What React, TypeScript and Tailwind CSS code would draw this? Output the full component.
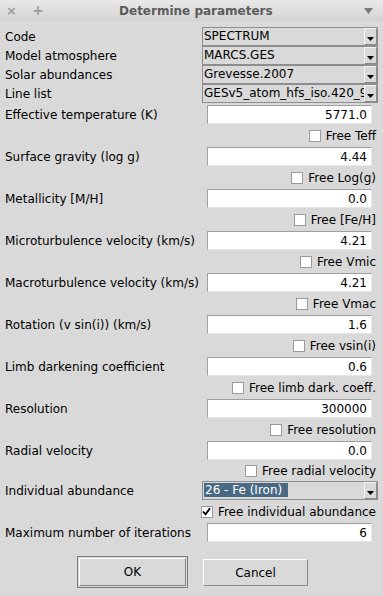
import React from 'react'

const font = { fontFamily: '"DejaVu Sans", Verdana, sans-serif' }

const combos = [
  { label: 'Code', value: 'SPECTRUM' },
  { label: 'Model atmosphere', value: 'MARCS.GES' },
  { label: 'Solar abundances', value: 'Grevesse.2007' },
  { label: 'Line list', value: 'GESv5_atom_hfs_iso.420_920nm' },
]

const params = [
  { label: 'Effective temperature (K)', value: '5771.0', free: 'Free Teff' },
  { label: 'Surface gravity (log g)', value: '4.44', free: 'Free Log(g)' },
  { label: 'Metallicity [M/H]', value: '0.0', free: 'Free [Fe/H]' },
  { label: 'Microturbulence velocity (km/s)', value: '4.21', free: 'Free Vmic' },
  { label: 'Macroturbulence velocity (km/s)', value: '4.21', free: 'Free Vmac' },
  { label: 'Rotation (v sin(i)) (km/s)', value: '1.6', free: 'Free vsin(i)' },
  { label: 'Limb darkening coefficient', value: '0.6', free: 'Free limb dark. coeff.' },
  { label: 'Resolution', value: '300000', free: 'Free resolution' },
  { label: 'Radial velocity', value: '0.0', free: 'Free radial velocity' },
]

function ArrowButton() {
  return (
    <div className="w-[13px] h-[17px] shrink-0 border-t border-l border-t-[#f4f4f4] border-l-[#f4f4f4] border-b border-r border-b-[#8a8a8a] border-r-[#8a8a8a] bg-[#d9d9d9] flex items-end justify-center pb-[3px]">
      <svg width="7" height="4" viewBox="0 0 7 4">
        <path d="M0 0h7L3.5 4z" fill="#000" />
      </svg>
    </div>
  )
}

function Combo({ value, selected }: { value: string; selected?: boolean }) {
  return (
    <div className="w-[176px] h-[19px] mr-[5px] border border-[#8e8e8e] bg-[#d9d9d9] flex items-center overflow-hidden">
      <div className="flex-1 min-w-0 overflow-hidden whitespace-nowrap pl-[1px] leading-[15px]">
        {selected ? (
          <span className="bg-[#4a6984] text-white px-[1px] pr-[6px]">{value}</span>
        ) : (
          <span className="text-black">{value}</span>
        )}
      </div>
      <ArrowButton />
    </div>
  )
}

function Entry({ value }: { value: string }) {
  return (
    <div className="w-[165px] h-[19px] mr-[11px] bg-white border border-t-[#a0a0a0] border-l-[#a0a0a0] border-b-[#e6e6e6] border-r-[#e6e6e6] flex items-center justify-end pr-[4px] text-black">
      {value}
    </div>
  )
}

function Check({ label, checked, h = 'h-[23px]' }: { label: string; checked?: boolean; h?: string }) {
  return (
    <div className={`${h} flex items-center justify-end pr-[7px] gap-[5px]`}>
      <div className="w-[12px] h-[12px] bg-white border border-[#9a9a9a] flex items-center justify-center">
        {checked && (
          <svg width="9" height="9" viewBox="0 0 9 9">
            <path d="M1 4.5l2.5 2.8L8 1.2" stroke="#000" strokeWidth="1.8" fill="none" />
          </svg>
        )}
      </div>
      <span className="text-black">{label}</span>
    </div>
  )
}

export default function App() {
  return (
    <div className="w-[383px] h-[596px] bg-[#d9d9d9] text-[12px] text-black overflow-hidden" style={font}>
      <div className="h-[21px] bg-gradient-to-b from-[#e9e9e9] to-[#d3d3d3] flex items-center px-[6px] relative">
        <span className="text-[#9a9a9a] text-[13px] font-bold w-[16px]">×</span>
        <span className="text-[#9a9a9a] text-[14px] font-bold ml-[10px]">+</span>
        <span className="flex-1 text-center font-bold text-[#5c5c5c] pr-[16px]">Determine parameters</span>
        <svg width="9" height="6" viewBox="0 0 9 6" className="mr-[4px]">
          <path d="M0 0h9L4.5 6z" fill="#777" />
        </svg>
      </div>

      <div className="pt-[6px] flex flex-col">
        {combos.map((c) => (
          <div key={c.label} className="h-[19px] flex items-center">
            <span className="flex-1 pl-[5px]">{c.label}</span>
            <Combo value={c.value} />
          </div>
        ))}

        <div className="mt-[2px] flex flex-col">
          {params.map((p, i) => (
            <div key={p.label}>
              <div className="h-[19px] flex items-center">
                <span className="flex-1 pl-[5px]">{p.label}</span>
                <Entry value={p.value} />
              </div>
              <Check label={p.free} h={i === params.length - 1 ? 'h-[21px]' : 'h-[23px]'} />
            </div>
          ))}
        </div>

        <div className="h-[19px] flex items-center">
          <span className="flex-1 pl-[5px]">Individual abundance</span>
          <Combo value="26 - Fe (Iron)" selected />
        </div>
        <Check label="Free individual abundance" checked />
        <div className="h-[19px] flex items-center">
          <span className="flex-1 pl-[5px]">Maximum number of iterations</span>
          <Entry value="6" />
        </div>

        <div className="mt-[14px] flex justify-center gap-[15px] pl-[2px]">
          <div className="border border-[#7d7d7d] p-[1px] w-[111px] h-[32px]">
            <button className="w-full h-full border border-t-white border-l-white border-b-[#8a8a8a] border-r-[#8a8a8a] bg-[#d9d9d9] text-black">
              OK
            </button>
          </div>
          <button className="mt-[3px] w-[105px] h-[27px] border border-t-white border-l-white border-b-[#8a8a8a] border-r-[#8a8a8a] bg-[#d9d9d9] text-black">
            Cancel
          </button>
        </div>
      </div>
    </div>
  )
}
